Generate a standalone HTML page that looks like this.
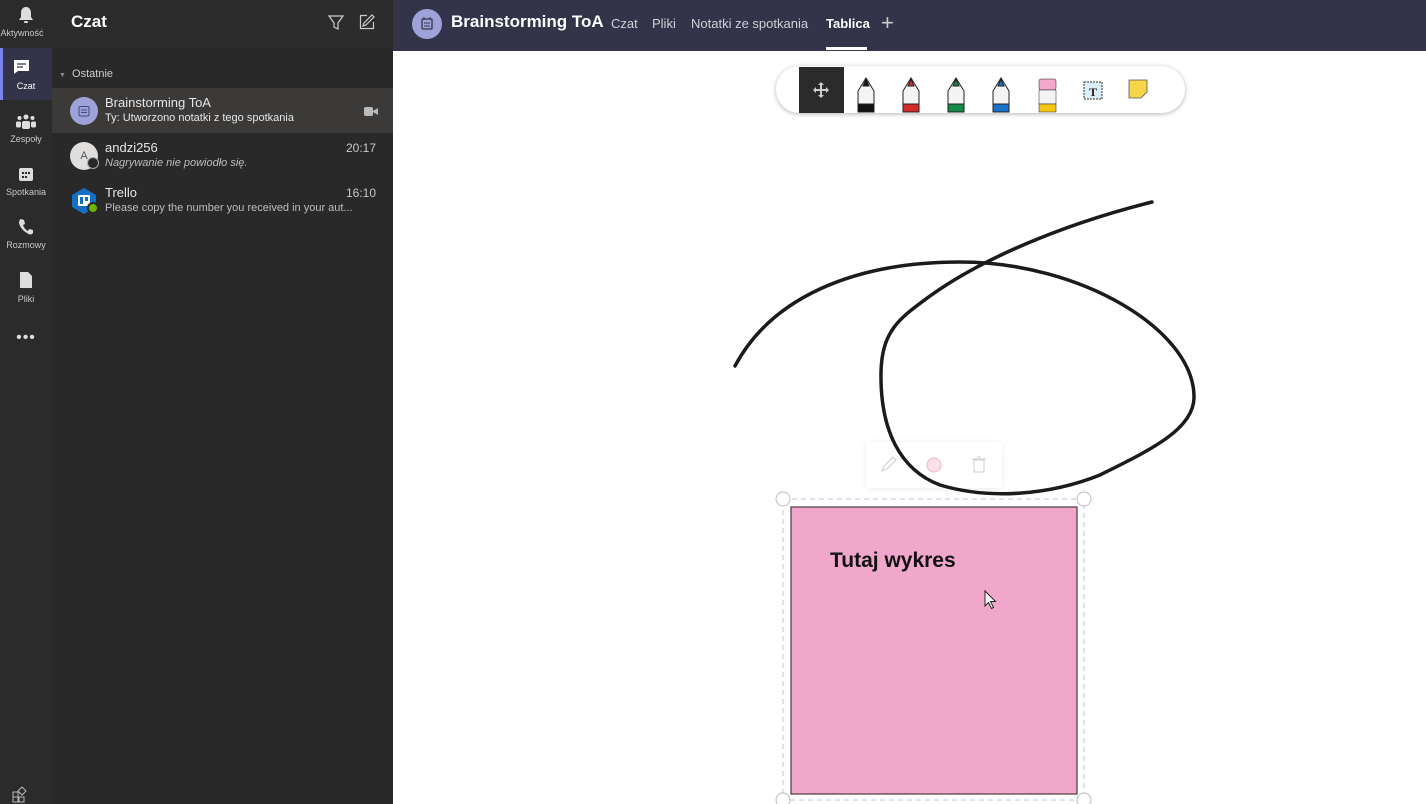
<!DOCTYPE html>
<html><head><meta charset="utf-8"><style>
*{box-sizing:border-box;margin:0;padding:0}
body{width:1426px;height:804px;overflow:hidden;background:#fff;font-family:"Segoe UI","Liberation Sans",sans-serif;position:relative}
.rail{position:absolute;left:0;top:0;width:52px;height:804px;background:#2b2b2b}
.ri{position:absolute;left:0;width:52px;height:48px;color:#c8c8c8;font-size:9px;text-align:center}
.ri .lb{position:absolute;top:32px;width:52px;left:0}
.list{position:absolute;left:52px;top:0;width:341px;height:804px;background:#292929;color:#fff}
.list .hd{height:47px;background:#2d2c2c}
.row{position:absolute;left:0;width:341px;height:45px}
.av{position:absolute;left:18px;top:9px;width:28px;height:28px;border-radius:50%}
.nm{position:absolute;left:53px;top:7px;font-size:13px;color:#e6e6e6}
.sb{position:absolute;left:53px;top:24px;font-size:11px;color:#bdbdbd;white-space:nowrap}
.tm{position:absolute;right:17px;top:8px;font-size:12px;color:#c8c8c8}
.top{position:absolute;left:393px;top:0;width:1033px;height:51px;background:#33344a;color:#fff}
.tab{position:absolute;top:16px;font-size:13px;color:#d0d0d8}
</style></head><body>
<div class="rail">
 <div class="ri" style="top:0"><svg style="position:absolute;left:18px;top:6px" width="16" height="18" viewBox="0 0 16 18"><path d="M8 1C4.5 1 3 4 3 7v4l-2 3h14l-2-3V7c0-3-1.5-6-5-6z" fill="#ddd"/><rect x="6" y="15" width="4" height="2" rx="1" fill="#ddd"/></svg><div class="lb" style="top:28px;left:-4px">Aktywność</div></div>
 <div class="ri" style="top:48px;height:52px;background:#33344a;color:#fff;border-left:3px solid #7b83eb"><svg style="position:absolute;left:10px;top:11px" width="17" height="16" viewBox="0 0 17 16"><path d="M1 1h15v11H5l-4 3z" fill="#fff"/><path d="M4 5h9M4 8h6" stroke="#33344a" stroke-width="1.3"/></svg><div class="lb" style="top:33px;left:-3px">Czat</div></div>
 <div class="ri" style="top:104px"><svg style="position:absolute;left:16px;top:10px" width="20" height="16" viewBox="0 0 20 16"><circle cx="10" cy="3" r="2.5" fill="#ddd"/><circle cx="3.5" cy="4" r="2" fill="#ddd"/><circle cx="16.5" cy="4" r="2" fill="#ddd"/><rect x="6" y="7" width="8" height="8" rx="2" fill="#ddd"/><rect x="0" y="7.5" width="5" height="6" rx="1.5" fill="#ddd"/><rect x="15" y="7.5" width="5" height="6" rx="1.5" fill="#ddd"/></svg><div class="lb" style="top:30px">Zespoły</div></div>
 <div class="ri" style="top:158px"><svg style="position:absolute;left:18px;top:8px" width="16" height="16" viewBox="0 0 16 16"><rect x="1" y="2" width="14" height="13" rx="2" fill="#ddd"/><g fill="#2b2b2b"><rect x="4" y="6" width="2" height="2"/><rect x="7" y="6" width="2" height="2"/><rect x="10" y="6" width="2" height="2"/><rect x="4" y="10" width="2" height="2"/><rect x="7" y="10" width="2" height="2"/></g></svg><div class="lb" style="top:29px">Spotkania</div></div>
 <div class="ri" style="top:212px"><svg style="position:absolute;left:18px;top:6px" width="16" height="17" viewBox="0 0 16 17"><path d="M3 1l3 1 1 4-2 1c1 3 3 5 5 6l1-2 4 1 0 3c-1 2-4 2-6 0C5 13 2 9 1 5 1 3 2 1 3 1z" fill="#ddd"/></svg><div class="lb" style="top:28px">Rozmowy</div></div>
 <div class="ri" style="top:266px"><svg style="position:absolute;left:19px;top:5px" width="14" height="18" viewBox="0 0 14 18"><path d="M1 1h8l4 4v12H1z" fill="#ddd"/></svg><div class="lb" style="top:28px">Pliki</div></div>
 <div class="ri" style="top:330px;font-size:16px;color:#ddd;line-height:16px;letter-spacing:1px">•••</div>
 <svg style="position:absolute;left:12px;top:786px" width="18" height="18" viewBox="0 0 18 18"><path d="M1 6h5v5H1zM7 11h5v5H7zM1 11h5v5H1zM10 1l4 4-4 4-4-4z" fill="none" stroke="#bbb"/></svg>
</div>
<div class="list">
 <div class="hd"><div style="position:absolute;left:19px;top:12px;font-size:17px;font-weight:bold">Czat</div>
 <svg style="position:absolute;left:276px;top:15px" width="16" height="16" viewBox="0 0 16 16"><path d="M1 1h14l-5 7v6l-4-2V8z" fill="none" stroke="#ccc" stroke-width="1.2"/></svg>
 <svg style="position:absolute;left:306px;top:14px" width="17" height="17" viewBox="0 0 17 17"><path d="M9 1.5H2.5v13h13V8" fill="none" stroke="#ccc" stroke-width="1.2"/><path d="M14 1l2 2-8 8-3 1 1-3z" fill="none" stroke="#ccc" stroke-width="1.2"/></svg></div>
 <div style="position:absolute;left:7px;top:68px;font-size:11px;color:#ccc"><span style="font-size:7px;color:#888">▼</span>&nbsp; Ostatnie</div>
 <div class="row" style="top:88px;background:#3b3a39"><div class="av" style="background:#9ea2d8"><svg style="position:absolute;left:8px;top:8px" width="12" height="12" viewBox="0 0 12 12"><rect x="1" y="1.5" width="10" height="9.5" rx="1" fill="none" stroke="#444a7a"/><path d="M3 5h6M3 7.5h6" stroke="#444a7a"/></svg></div><div class="nm">Brainstorming ToA</div><div class="sb" style="color:#e6e6e6">Ty: Utworzono notatki z tego spotkania</div><svg style="position:absolute;left:312px;top:19px" width="14" height="9"><rect width="9" height="9" rx="2" fill="#bbb"/><path d="M9 4l5-3v7l-5-3z" fill="#bbb"/></svg></div>
 <div class="row" style="top:133px"><div class="av" style="background:#e1dfdd;color:#555;font-size:11px;text-align:center;line-height:28px">A</div><div style="position:absolute;left:35px;top:24px;width:12px;height:12px;border-radius:50%;background:#292929;border:1.5px solid #aaa"></div><div class="nm">andzi256</div><div class="sb" style="font-style:italic">Nagrywanie nie powiodło się.</div><div class="tm">20:17</div></div>
 <div class="row" style="top:178px"><svg class="av" style="border-radius:0" width="28" height="28" viewBox="0 0 28 28"><path d="M14 1l12 7v12l-12 7-12-7V8z" fill="#1470c6"/><rect x="8" y="8" width="12" height="11" rx="1" fill="#fff"/><rect x="10" y="10" width="3" height="7" fill="#1470c6"/><rect x="15" y="10" width="3" height="4" fill="#1470c6"/></svg><div style="position:absolute;left:35px;top:24px;width:12px;height:12px;border-radius:50%;background:#6bb700;border:2px solid #292929"></div><div class="nm">Trello</div><div class="sb">Please copy the number you received in your aut...</div><div class="tm">16:10</div></div>
</div>
<div class="top">
 <div style="position:absolute;left:19px;top:9px;width:30px;height:30px;border-radius:50%;background:#9ea2d8"><svg style="position:absolute;left:9px;top:8px" width="12" height="13" viewBox="0 0 12 13"><rect x="1" y="2" width="10" height="10" rx="1" fill="none" stroke="#33344a" stroke-width="1.3"/><path d="M3 0v3M9 0v3M3 6h6M3 9h6" stroke="#33344a"/></svg></div>
 <div style="position:absolute;left:58px;top:12px;font-size:17px;font-weight:bold">Brainstorming ToA</div>
 <div class="tab" style="left:218px">Czat</div><div class="tab" style="left:259px">Pliki</div><div class="tab" style="left:298px">Notatki ze spotkania</div>
 <div class="tab" style="left:433px;color:#fff;font-weight:bold">Tablica</div>
 <div style="position:absolute;left:433px;top:47px;width:41px;height:3px;background:#fff"></div>
 <div style="position:absolute;left:488px;top:10px;font-size:22px;color:#ccc;font-weight:300">+</div>
</div>
<div style="position:absolute;left:776px;top:66px;width:409px;height:47px;border-radius:24px;background:#fff;box-shadow:0 1px 5px rgba(0,0,0,.3)"></div>
<div style="position:absolute;left:799px;top:67px;width:45px;height:46px;background:#2b2b2b"><svg style="position:absolute;left:14px;top:15px" width="16" height="16" viewBox="0 0 16 16" fill="#ccc"><path d="M8 0l3 3H5zM8 16l3-3H5zM0 8l3-3v6zM16 8l-3-3v6z"/><rect x="7" y="3" width="2" height="10"/><rect x="3" y="7" width="10" height="2"/></svg></div>
<svg style="position:absolute;left:850px;top:76px" width="310" height="38" viewBox="0 0 310 38">
 <g stroke="#222" stroke-width="1">
 <path d="M8 36V15l8-13 8 13v21z" fill="#f4f4f4"/><path d="M13 10l3-7 3 7z" fill="#111"/><rect x="8" y="28" width="16" height="8" fill="#111"/>
 <path d="M53 36V15l8-13 8 13v21z" fill="#f4f4f4"/><path d="M58 10l3-7 3 7z" fill="#d42a2a"/><rect x="53" y="28" width="16" height="8" fill="#d42a2a"/>
 <path d="M98 36V15l8-13 8 13v21z" fill="#f4f4f4"/><path d="M103 10l3-7 3 7z" fill="#128a4a"/><rect x="98" y="28" width="16" height="8" fill="#128a4a"/>
 <path d="M143 36V15l8-13 8 13v21z" fill="#f4f4f4"/><path d="M148 10l3-7 3 7z" fill="#1a6fc9"/><rect x="143" y="28" width="16" height="8" fill="#1a6fc9"/>
 <rect x="189" y="3" width="17" height="11" rx="2" fill="#f2a7cb" stroke-width=".5"/><rect x="189" y="14" width="17" height="14" fill="#f4f4f4" stroke-width=".5"/><rect x="189" y="28" width="17" height="8" fill="#f5c518" stroke-width=".5"/>
 <rect x="234" y="6" width="18" height="17" fill="#dbeffa" stroke="#333" stroke-dasharray="2 1"/>
 <path d="M279 4h18v12l-6 6h-12z" fill="#f7d548" stroke="#555" stroke-width=".8"/>
 </g>
 <text x="243" y="20" font-family="Liberation Serif,serif" font-weight="bold" font-size="12" text-anchor="middle" fill="#222">T</text>
</svg>
<div style="position:absolute;left:866px;top:442px;width:136px;height:46px;background:#fff;box-shadow:0 1px 6px rgba(0,0,0,.08)"><svg width="136" height="46"><path d="M16 29l2-5 9-9 3 3-9 9z" fill="none" stroke="#ccc"/><circle cx="68" cy="23" r="7" fill="#fbe0ea" stroke="#e8b6c8"/><rect x="108" y="18" width="10" height="12" fill="none" stroke="#ccc"/><path d="M106 17h14M111 15h4" stroke="#ccc"/></svg></div>
<svg style="position:absolute;left:0;top:0" width="1426" height="804">
 <path d="M735 366C770 300 850 262 960 262C1080 262 1195 330 1194 398C1193 430 1150 450 1100 475C1050 495 990 500 940 485C900 470 880 430 881 372C882 330 900 318 930 296C980 260 1060 225 1152 202" fill="none" stroke="#1b1b1b" stroke-width="3.5" stroke-linecap="round"/>
 <rect x="783" y="499" width="301" height="301" fill="none" stroke="#b8c4dc" stroke-dasharray="5 4"/>
 <g fill="#fff" stroke="#bbb"><circle cx="783" cy="499" r="7"/><circle cx="1084" cy="499" r="7"/><circle cx="783" cy="800" r="7"/><circle cx="1084" cy="800" r="7"/></g>
 <rect x="791" y="507" width="286" height="287" fill="#f1a7cc" stroke="#4a3a40" stroke-width="1.2"/>
 <path d="M985 591v15l3.5-3.5 3 6 2-1-3-6h5z" fill="#fff" stroke="#222" stroke-width="1"/>
</svg>
<div style="position:absolute;left:830px;top:549px;font-size:21px;font-weight:bold;color:#111">Tutaj wykres</div>
</body></html>
